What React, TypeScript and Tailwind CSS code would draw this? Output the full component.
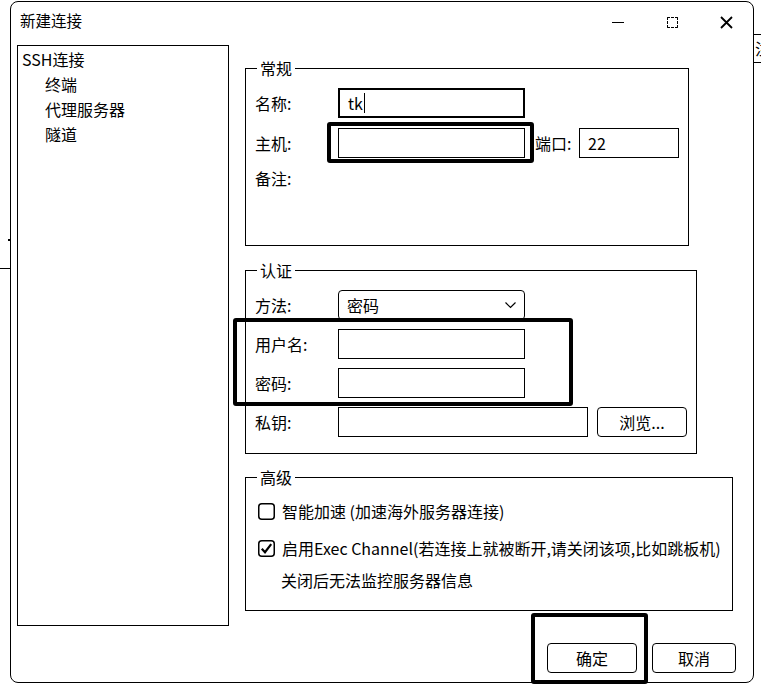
import React from "react";

const font = "font-['Noto_Sans_CJK_SC','Noto_Sans',sans-serif]";

function Group({ title, className, children }: { title: string; className: string; children: React.ReactNode }) {
  return (
    <fieldset className={`border border-black px-[9px] ${className}`}>
      <legend className="ml-[2px] px-[3px] leading-[20px]">{title}</legend>
      {children}
    </fieldset>
  );
}

function Label({ text, w = "w-[83px]" }: { text: string; w?: string }) {
  return <div className={`${w} shrink-0 leading-[20px]`}>{text}</div>;
}

function Box({ w, thick, children }: { w: string; thick?: boolean; children?: React.ReactNode }) {
  return (
    <div className={`${w} h-[30px] ${thick ? "border-2" : "border"} border-black flex items-center pl-[8px]`}>
      {children}
    </div>
  );
}

function CheckBox({ checked }: { checked?: boolean }) {
  return (
    <svg width="17" height="17" viewBox="0 0 17 17" className="shrink-0">
      <rect x="0.75" y="0.75" width="15.5" height="15.5" rx="3" fill="none" stroke="black" strokeWidth="1.5" />
      {checked && <path d="M3.8 8.8 L7 12.2 L13.2 4.2" fill="none" stroke="black" strokeWidth="2.2" />}
    </svg>
  );
}

export default function App() {
  return (
    <div className={`relative w-[761px] h-[690px] bg-white overflow-hidden text-black text-[16px] ${font}`}>
      {/* dialog window */}
      <div className="ml-[10px] mt-[1px] w-[744px] h-[682px] border border-black rounded-[8px] flex flex-col">
        {/* title bar */}
        <div className="h-[43px] flex items-start shrink-0">
          <div className="pl-[9px] pt-[8px] leading-[20px] text-[15.5px]">新建连接</div>
          <div className="ml-auto flex h-[40px]">
            <div className="w-[54px] flex items-center justify-center">
              <div className="w-[12px] h-px bg-black" />
            </div>
            <div className="w-[54px] flex items-center justify-center">
              <div className="w-[11px] h-[11px] border border-dashed border-black rounded-[1px]" />
            </div>
            <div className="w-[54px] flex items-center justify-center">
              <svg width="13" height="13" viewBox="0 0 13 13">
                <path d="M1 1 L12 12 M12 1 L1 12" stroke="black" strokeWidth="1.8" />
              </svg>
            </div>
          </div>
        </div>

        {/* body */}
        <div className="flex pl-[6px]">
          {/* tree */}
          <div className="w-[212px] h-[581px] border border-black pl-[4px] pt-[1px] leading-[25px] shrink-0">
            <div>SSH连接</div>
            <div className="pl-[23px]">终端</div>
            <div className="pl-[23px]">代理服务器</div>
            <div className="pl-[23px]">隧道</div>
          </div>

          {/* forms */}
          <div className="ml-[16px] flex flex-col">
            <Group title="常规" className="w-[444px] mt-[13px] pt-[10px] pb-[57px]">
              <div className="flex flex-col gap-[10px]">
                <div className="flex items-center h-[30px]">
                  <Label text="名称:" />
                  <Box w="w-[187px]" thick>
                    <span>tk</span>
                    <span className="w-px h-[20px] bg-black ml-[1px]" />
                  </Box>
                </div>
                <div className="flex items-center h-[30px]">
                  <Label text="主机:" />
                  <Box w="w-[187px]" />
                  <div className="ml-[10px] w-[44px] leading-[20px]">端口:</div>
                  <Box w="w-[100px]">22</Box>
                </div>
                <div className="flex items-center h-[20px]">
                  <Label text="备注:" />
                </div>
              </div>
            </Group>

            <Group title="认证" className="w-[452px] mt-[14px] pt-[10px] pb-[16px]">
              <div className="flex flex-col gap-[9px]">
                <div className="flex items-center h-[30px]">
                  <Label text="方法:" />
                  <div className="w-[187px] h-[30px] border border-black rounded-[4px] flex items-center pl-[8px] pr-[8px]">
                    <span>密码</span>
                    <svg width="11" height="7" viewBox="0 0 11 7" className="ml-auto">
                      <path d="M0.5 0.5 L5.5 5.5 L10.5 0.5" fill="none" stroke="black" strokeWidth="1.2" />
                    </svg>
                  </div>
                </div>
                <div className="flex items-center h-[30px]">
                  <Label text="用户名:" />
                  <Box w="w-[187px]" />
                </div>
                <div className="flex items-center h-[30px]">
                  <Label text="密码:" />
                  <Box w="w-[187px]" />
                </div>
                <div className="flex items-center h-[30px]">
                  <Label text="私钥:" />
                  <Box w="w-[250px]" />
                  <div className="ml-[9px] w-[90px] h-[30px] border border-black rounded-[4px] flex items-center justify-center">
                    浏览...
                  </div>
                </div>
              </div>
            </Group>

            <Group title="高级" className="w-[488px] mt-[13px] pt-[13px] pb-[19px]">
              <div className="flex items-center h-[22px] pl-[3px] gap-[7px] whitespace-nowrap">
                <CheckBox />
                <span>智能加速 (加速海外服务器连接)</span>
              </div>
              <div className="flex items-center h-[22px] mt-[15px] pl-[3px] gap-[7px] whitespace-nowrap">
                <CheckBox checked />
                <span>启用Exec Channel(若连接上就被断开,请关闭该项,比如跳板机)</span>
              </div>
              <div className="flex items-center h-[22px] mt-[10px] pl-[26px] whitespace-nowrap">
                关闭后无法监控服务器信息
              </div>
            </Group>

            <div className="flex mt-[32px] ml-[302px] gap-[15px]">
              <div className="w-[90px] h-[30px] border border-black rounded-[4px] flex items-center justify-center">确定</div>
              <div className="w-[84px] h-[30px] border border-black rounded-[4px] flex items-center justify-center">取消</div>
            </div>
          </div>
        </div>
      </div>

      {/* highlight frames drawn over the dialog */}
      <div className="absolute left-[327px] top-[122px] w-[207px] h-[41px] border-4 border-black rounded-[3px]" />
      <div className="absolute left-[233px] top-[318px] w-[340px] h-[88px] border-4 border-black rounded-[3px]" />
      <div className="absolute left-[531px] top-[613px] w-[117px] h-[71px] border-4 border-black rounded-[3px]" />

      {/* edge fragments of windows behind */}
      <div className="absolute left-[753px] top-[34px] w-[20px] h-[29px] border border-black pl-[1px] leading-[27px]">注</div>
      <div className="absolute left-[8px] top-[239px] w-[2px] h-[2px] bg-black" />
      <div className="absolute left-0 top-[268px] w-[10px] h-px bg-black" />
    </div>
  );
}
